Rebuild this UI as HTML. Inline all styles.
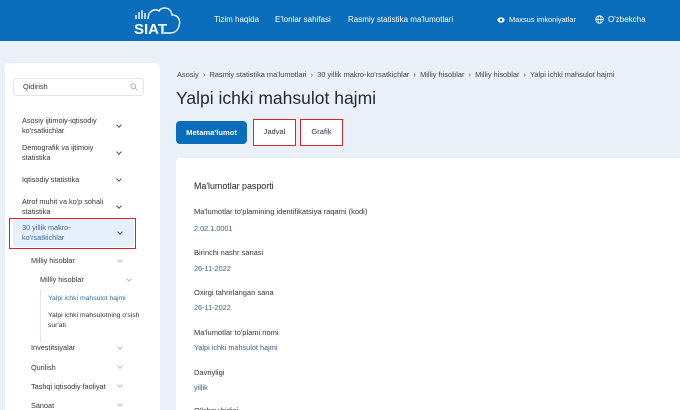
<!DOCTYPE html>
<html><head><meta charset="utf-8"><style>
*{margin:0;padding:0;box-sizing:border-box}
html,body{width:680px;height:410px;overflow:hidden}
body{background:#e9f0f8;font-family:"Liberation Sans",sans-serif;position:relative;color:#2b3440}
.a{position:absolute;white-space:nowrap}
.hdr{position:absolute;left:0;top:0;width:680px;height:41px;background:#0a6dbb}
.nav{color:#fff;font-size:8px;top:15px}
.side{position:absolute;left:5px;top:63px;width:155px;height:360px;background:#fff;border-radius:4px}
.s{font-size:7.3px;line-height:10px;color:#333}
.chev{position:absolute;width:4px;height:4px;border-right:1px solid #555;border-bottom:1px solid #555;transform:rotate(45deg)}
.chev.l{border-color:#bbb}
.bc{font-size:7.4px;color:#444;top:70px}
.card{position:absolute;left:176px;top:158px;width:510px;height:260px;background:#fff;border-radius:4px}
.lb{font-size:7.5px;color:#333}
.vl{font-size:7.3px;color:#3a5f86}
</style></head><body>
<div class="hdr"></div>
<svg class="a" style="left:133px;top:5px" width="52" height="34" viewBox="0 0 52 34">
<g stroke="#fff" stroke-width="1.4" fill="none">
<line x1="3" y1="14" x2="3" y2="10"/><line x1="6" y1="14" x2="6" y2="7"/><line x1="9" y1="14" x2="9" y2="5"/><line x1="12" y1="14" x2="12" y2="8"/>
<path d="M15 14 C15 6 22 3 26 6 C29 1 38 2 39 10 C45 10 48 15 46 21 C45 25 42 28 37 28 L31 28"/>
</g>
<text x="1" y="29" fill="#fff" font-size="15" font-weight="bold" font-family="Liberation Sans">SIAT</text>
</svg>
<div class="a nav" style="left:214px">Tizim haqida</div>
<div class="a nav" style="left:275px">E'lonlar sahifasi</div>
<div class="a nav" style="left:348px">Rasmiy statistika ma'lumotlari</div>
<svg class="a" style="left:497px;top:17px" width="8" height="6"><ellipse cx="4" cy="3" rx="3.6" ry="2.6" fill="#fff"/><circle cx="4" cy="3" r="1.2" fill="#0a6dbb"/></svg>
<div class="a nav" style="left:509px;font-size:7.4px">Maxsus imkoniyatlar</div>
<svg class="a" style="left:595px;top:15px" width="9" height="9" viewBox="0 0 10 10"><g fill="none" stroke="#fff" stroke-width="0.9"><circle cx="5" cy="5" r="4.2"/><ellipse cx="5" cy="5" rx="1.8" ry="4.2"/><line x1="0.8" y1="5" x2="9.2" y2="5"/></g></svg>
<div class="a nav" style="left:608px">O'zbekcha</div>

<div class="side"></div>
<div class="a" style="left:13px;top:78px;width:131px;height:18px;border:1px solid #e2e6ea;border-radius:3px"></div>
<div class="a s" style="left:23px;top:82px">Qidirish</div>
<svg class="a" style="left:130px;top:83px" width="8" height="8"><circle cx="3.3" cy="3.3" r="2.5" fill="none" stroke="#aaa" stroke-width="0.8"/><line x1="5" y1="5" x2="7.5" y2="7.5" stroke="#aaa" stroke-width="0.8"/></svg>

<div class="a s" style="left:22px;top:116px">Asosiy ijtimoiy-iqtisodiy<br>ko'rsatkichlar</div><div class="chev" style="left:117px;top:123px"></div>
<div class="a s" style="left:22px;top:143px">Demografik va ijtimoiy<br>statistika</div><div class="chev" style="left:117px;top:150px"></div>
<div class="a s" style="left:22px;top:175px">Iqtisodiy statistika</div><div class="chev" style="left:117px;top:177px"></div>
<div class="a s" style="left:22px;top:197px">Atrof muhit va ko'p sohali<br>statistika</div><div class="chev" style="left:117px;top:204px"></div>
<div class="a" style="left:13px;top:219px;width:121px;height:28px;background:#e5f0fa;border-radius:3px"></div>
<div class="a" style="left:9px;top:218px;width:127px;height:31px;border:1.5px solid #d0262c"></div>
<div class="a s" style="left:22px;top:223px;color:#3a6a96">30 yillik makro-<br>ko'rsatkichlar</div><div class="chev" style="left:118px;top:230px"></div>
<div class="a s" style="left:31px;top:256px">Milliy hisoblar</div><div class="chev l" style="left:118px;top:258px"></div>
<div class="a s" style="left:40px;top:275px">Milliy hisoblar</div><div class="chev l" style="left:127px;top:277px"></div>
<div class="a" style="left:40px;top:290px;width:1px;height:52px;background:#e3e6ea"></div>
<div class="a s" style="left:48px;top:294px;font-size:6.8px;color:#3a6a96">Yalpi ichki mahsulot hajmi</div>
<div class="a s" style="left:48px;top:311px;font-size:6.8px">Yalpi ichki mahsulotning o'sish<br>sur'ati</div>
<div class="a s" style="left:31px;top:343px">Investitsiyalar</div><div class="chev l" style="left:118px;top:345px"></div>
<div class="a s" style="left:31px;top:363px">Qurilish</div><div class="chev l" style="left:118px;top:364px"></div>
<div class="a s" style="left:31px;top:382px">Tashqi iqtisodiy faoliyat</div><div class="chev l" style="left:118px;top:383px"></div>
<div class="a s" style="left:31px;top:401px">Sanoat</div><div class="chev l" style="left:118px;top:402px"></div>

<div class="a bc" style="left:177px">Asosiy &nbsp;›&nbsp; Rasmiy statistika ma'lumotlari &nbsp;›&nbsp; 30 yillik makro-ko'rsatkichlar &nbsp;›&nbsp; Milliy hisoblar &nbsp;›&nbsp; Milliy hisoblar &nbsp;›&nbsp; Yalpi ichki mahsulot hajmi</div>
<div class="a" style="left:176px;top:88px;font-size:17.5px;color:#1f2a36">Yalpi ichki mahsulot hajmi</div>

<div class="a" style="left:176px;top:121px;width:71px;height:23px;background:#0a6dbb;border-radius:4px;color:#fff;font-size:7.6px;font-weight:bold;text-align:center;line-height:23px">Metama'lumot</div>
<div class="a" style="left:253px;top:119px;width:43px;height:27px;background:#fff;border:1.5px solid #d0262c;font-size:7.6px;text-align:center;line-height:24px">Jadval</div>
<div class="a" style="left:300px;top:119px;width:43px;height:27px;background:#fff;border:1.5px solid #d0262c;font-size:7.6px;text-align:center;line-height:24px">Grafik</div>

<div class="card"></div>
<div class="a" style="left:194px;top:181px;font-size:8.9px;color:#222">Ma'lumotlar pasporti</div>
<div class="a lb" style="left:194px;top:207px">Ma'lumotlar to'plamining identifikatsiya raqami (kodi)</div>
<div class="a vl" style="left:194px;top:224px">2.02.1.0001</div>
<div class="a lb" style="left:194px;top:248px">Birinchi nashr sanasi</div>
<div class="a vl" style="left:194px;top:264px">26-11-2022</div>
<div class="a lb" style="left:194px;top:288px">Oxirgi tahrirlangan sana</div>
<div class="a vl" style="left:194px;top:303px">26-11-2022</div>
<div class="a lb" style="left:194px;top:328px">Ma'lumotlar to'plami nomi</div>
<div class="a vl" style="left:194px;top:343px">Yalpi ichki mahsulot hajmi</div>
<div class="a lb" style="left:194px;top:368px">Davriyligi</div>
<div class="a vl" style="left:194px;top:383px">yillik</div>
<div class="a lb" style="left:194px;top:406px">O'lchov birligi</div>
</body></html>
